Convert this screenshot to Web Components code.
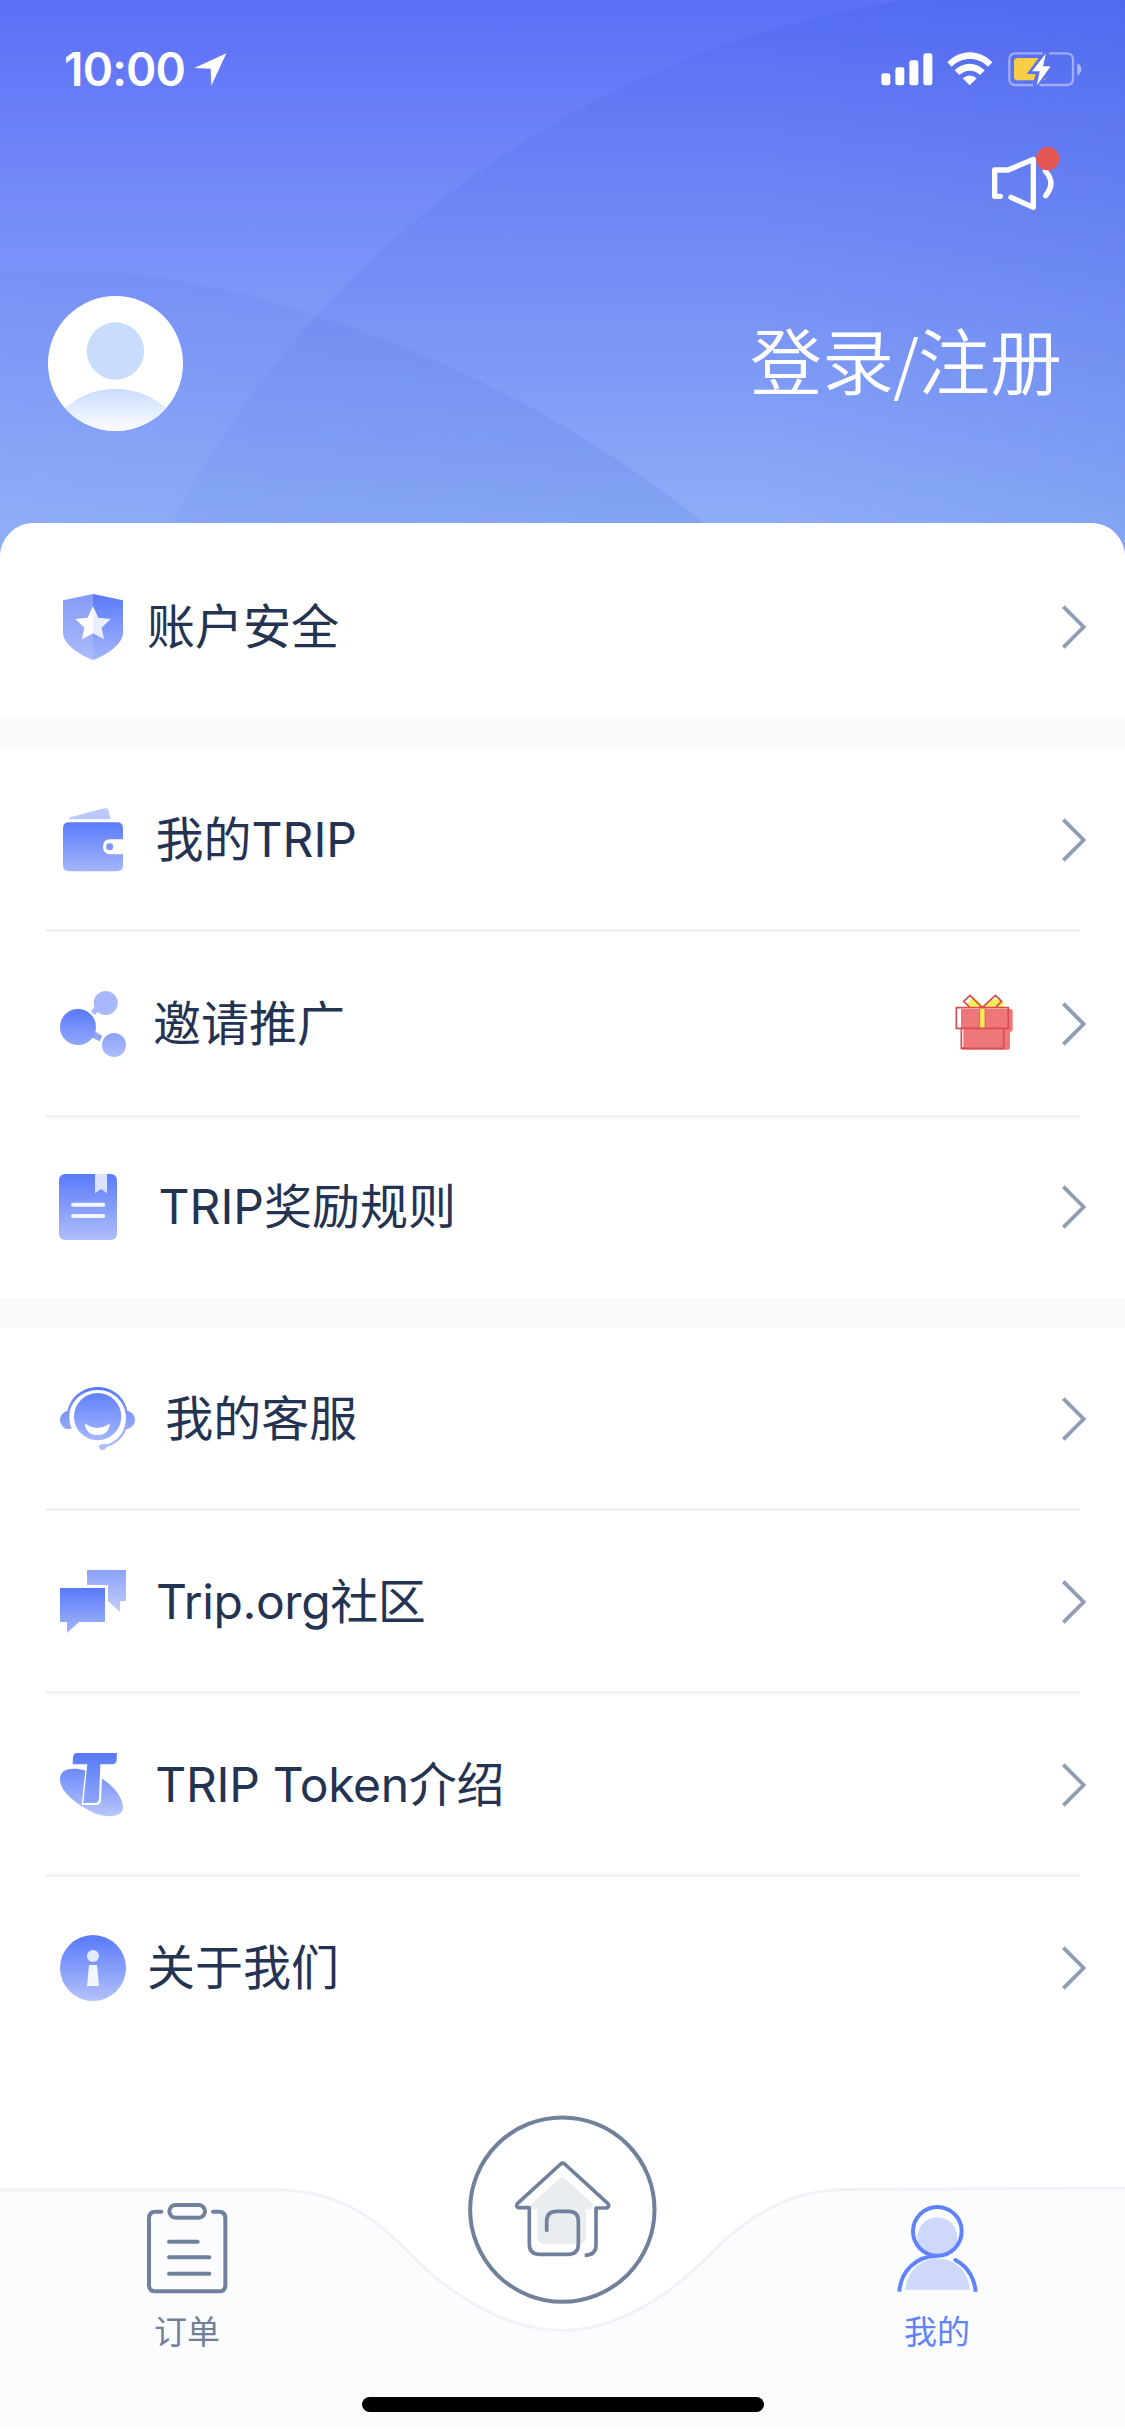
<!DOCTYPE html>
<html lang="zh-CN">
<head>
<meta charset="utf-8">
<title>我的</title>
<style>
html,body{margin:0;padding:0;background:#fff}
body{width:1125px;height:2436px;overflow:hidden;font-family:Inter,"Noto Sans CJK SC",sans-serif;color:#253353}
</style>
</head>
<body>
<profile-page></profile-page>
<script>
const define = (name, html) => {
  const t = document.createElement('template');
  t.innerHTML = html;
  customElements.define(name, class extends HTMLElement {
    constructor() {
      super();
      this.attachShadow({ mode: 'open' }).appendChild(t.content.cloneNode(true));
    }
  });
};

const grad = (id, a, b, y1, y2) =>
  `<linearGradient id="${id}" gradientUnits="userSpaceOnUse" x1="0" y1="${y1}" x2="0" y2="${y2}"><stop stop-color="${a}"/><stop offset="1" stop-color="${b}"/></linearGradient>`;

/* Each glyph: viewBox in thirds of a pixel, rendered size, and markup. */
const ICONS = {
  shield: ['99 72 180 198', 60, 66, `<defs>${grad('a','#849bf7','#acbbfa',72,270)}${grad('b','#5a7bfa','#a3b5fb',72,270)}</defs>
    <path fill="url(#a)" d="M189 72 99 91V188C99 222 150 256 189 270Z"/><path fill="url(#b)" d="M189 72 279 91V188C279 222 228 256 189 270Z"/>
    <path fill="#fff" d="M189 108 173 143 136 147 163 173 156 208 189 190Z"/><path fill="#e9effe" d="M189 108 205 143 242 147 215 173 222 208 189 190Z"/>`],
  wallet: ['99 710 180 190', 60, 63.3, `<defs>${grad('a','#5a7bfa','#a5b6fb',753,900)}</defs>
    <path fill="#bac8fc" d="M116 744Q116 739 123 737L224 711Q232 709 235 717L242 744Z"/>
    <path fill="url(#a)" d="M117 753H261Q279 753 279 771V804H241Q219 804 219 826Q219 849 241 849H279V882Q279 900 261 900H117Q99 900 99 882V771Q99 753 117 753Z"/><circle cx="239" cy="826" r="10.500" fill="#7c96f9"/>`],
  share: ['90 90 198 198', 66, 66, `<defs>${grad('a','#587afa','#92a7fa',144,252)}${grad('b','#8aa1f9','#b0befb',216,288)}</defs>
    <path d="M183 150 194 138 206 150 194 162Z" fill="#a8b8fb"/><path d="M193 210 217 225 209 241 183 229Z" fill="#8fa5fa"/>
    <circle cx="144" cy="198" r="54" fill="url(#a)"/><circle cx="227" cy="126" r="36" fill="#a8b8fb"/><circle cx="252" cy="252" r="36" fill="url(#b)"/>`],
  book: ['84 639 174 198', 58, 66, `<defs>${grad('a','#5a7bfa','#afbefb',639,837)}</defs>
    <rect x="84" y="639" width="174" height="198" rx="18" fill="url(#a)"/><path fill="#d9e2fe" d="M192 639H228V697L210 684 192 697Z"/>
    <path d="M126 731H217M126 765H217" stroke="#f4f6ff" stroke-width="12" stroke-linecap="round"/>`],
  headset: ['90 113 226 190', 75.3, 63.3, `<defs>${grad('a','#587afa','#b3c1fb',113,302)}</defs>
    <circle cx="203" cy="202" r="71" fill="url(#a)"/><path d="M164 222Q203 250 240 222Q236 258 202 258Q168 257 164 222Z" fill="#fff"/>
    <path fill="url(#a)" fill-rule="evenodd" d="M113 184C121 143 158 113 203 113C248 113 284 143 292 184C306 188 315 198 315 211C315 226 304 238 289 239C278 268 256 286 230 293C228 305 207 305 207 293C207 283 219 283 231 285C270 273 288 240 288 206C288 158 250 122 203 122C156 122 118 158 118 202C118 214 120 226 125 238C105 244 90 228 90 211C90 198 100 188 113 184Z"/>`],
  chat: ['90 657 198 190', 66, 63.3, `<defs>${grad('a','#587afa','#a4b5fb',711,846)}${grad('b','#8ba1f9','#c3cffc',657,783)}</defs>
    <path fill="url(#b)" d="M171 657H288V750H270V783L234 750V702H171Z"/><path fill="url(#a)" d="M90 711H225V813H147L111 846V813H90Z"/>`],
  token: ['90 96 190 190', 63.3, 63.3, `<defs>${grad('a','#587afa','#8fa6fa',96,250)}${grad('b','#6a88fa','#b9c6fc',140,286)}</defs>
    <path fill="url(#b)" d="M90 174C90 142 130 138 166 149L155 252H198Q212 252 213 238L216 173C254 196 279 232 279 259C279 292 226 290 192 276C140 250 90 214 90 174Z"/>
    <path fill="url(#a)" d="M142 96H261L260 118Q259 130 247 130H211L207 233Q206 246 194 246H160L172 130H128L129 109Q130 96 142 96Z"/>`],
  info: ['90 645 198 198', 66, 66, `<defs>${grad('a','#587afa','#b3c1fb',645,843)}</defs>
    <circle cx="189" cy="744" r="99" fill="url(#a)"/><circle cx="189" cy="708" r="18" fill="#e3eafe"/><path d="M177 735H201L207 798H171Z" fill="#f3f6ff"/>`],
  gift: ['165 103 174 168', 58, 56, `<g><path fill="#ef7779" d="M183 148H333Q338 148 338 153V211Q338 216 330 217V264Q330 270 324 270H190Q183 270 183 264Z"/>
    <path fill="#f5eb58" d="M202 130 222 111 247 138 280 118 303 122 312 132 308 142 298 145H210Z"/>
    <path fill="#fff" d="M191 125 210 106 219 114 200 133ZM169 145H183V205H169ZM186 208H190V262H186Z"/><path fill="#f5eb58" d="M239 146H255V206H239Z"/>
    <path fill="none" stroke="#d94b50" stroke-width="5" d="M169 144H325V206H169ZM184 206H311V266H184ZM210 144 191 125 210 107 247 144 286 107 305 125 286 144"/><path fill="none" stroke="#d94b50" stroke-width="2" d="M239 146V206M255 146V206"/></g>`],
  chevron: ['488 124 70 132', 23.3, 44, `<path d="M492 129 553 190 492 251" fill="none" stroke="#909db2" stroke-width="11.500"/>`],
  location: ['582 166 98 98', 32.7, 32.7, `<path fill="#fff" d="M679 167 634 264 632 213 583 211Z"/>`],
  signal: ['62 68 155 98', 51.7, 32.7, `<g fill="#fff"><rect x="63" y="129" width="27" height="36" rx="7"/><rect x="105" y="111" width="27" height="54" rx="7"/><rect x="147" y="90" width="27" height="75" rx="7"/><rect x="189" y="69" width="27" height="96" rx="7"/></g>`],
  wifi: ['262 65 137 101', 45.7, 33.7, `<g fill="#fff"><path d="M263 96C300 56 361 56 398 96L385 109C355 78 306 78 276 109Z"/><path d="M285 120C310 94 350 94 375 120L361 134C344 117 317 117 299 134Z"/><path d="M309 144Q330 127 351 144L330 165Z"/></g>`],
  battery: ['443 65 222 104', 74, 34.7, `<path d="M547 69H466Q447 69 447 88V145Q447 164 466 164H519M566 69H619Q638 69 638 88V145Q638 164 619 164H537" fill="none" stroke="#fff" stroke-opacity=".42" stroke-width="7"/><path d="M651 99Q663 105 663 117Q663 129 651 136Z" fill="#fff" opacity=".5"/><path fill="#f8ce47" d="M472 83H535L499 131H526L521 150H472Q461 150 461 139V94Q461 83 472 83ZM557 143 552 150 549 149Z"/><path fill="#fff" d="M557 69 515 123H538L529 166 571 108H548Z"/>`],
  speaker: ['396 350 202 192', 67.3, 64, `<path fill="none" stroke="#fff" stroke-width="16" stroke-linecap="round" stroke-linejoin="round" d="M421 498H404V419H444L520 387V531L453 501"/><path fill="none" stroke="#fff" stroke-width="16" stroke-linecap="round" d="M556 422Q589 458 557 496"/><circle cx="563" cy="385" r="35" fill="#e55753"/>`],
  avatar: ['0 0 135 135', 135, 135, `<defs>${grad('a','#c9dcfd','#ffffff',93,137)}<clipPath id="c"><circle cx="67.500" cy="67.500" r="67.500"/></clipPath></defs>
    <circle cx="67.500" cy="67.500" r="67.500" fill="#fff"/><circle cx="67.500" cy="55" r="28.700" fill="#c9dcfe"/><circle cx="67.500" cy="170" r="77" fill="url(#a)" clip-path="url(#c)"/>`],
  orders: ['142 127 242 272', 80.7, 90.7, `<g fill="none" stroke="#71819c" stroke-width="12" stroke-linecap="round"><path d="M185 153H168Q148 153 148 173V373Q148 392 168 392H358Q377 392 377 373V173Q377 153 358 153H340"/><rect x="209" y="133" width="107" height="38" rx="19"/><path d="M208 243H294M208 290H329M208 339H329"/></g>`],
  person: ['111 133 242 260', 80.7, 86.7, `<circle cx="232" cy="230" r="60" fill="#ced8fb"/><path d="M136 387C140 333 180 294 233 294C287 294 326 333 329 387Z" fill="#ced8fb"/><g fill="none" stroke="#6083fb" stroke-width="12"><circle cx="232" cy="212" r="73"/><path d="M118 393C122 333 166 286 232 286"/><path d="M286 298Q340 327 347 393"/></g><circle cx="286" cy="298" r="6" fill="#6083fb"/>`],
  home: ['84 74 566 568', 188.7, 189.3, `<circle cx="367" cy="358" r="276.500" fill="#fff" stroke="#71819c" stroke-width="12"/>
    <path fill="#e9edf0" d="M358 265Q367 257 376 265L458 341Q464 350 452 357H438V440Q438 462 416 462H314Q292 462 292 440V357H278Q268 350 274 341Z"/>
    <path fill="none" stroke="#71819c" stroke-width="11" stroke-linejoin="round" d="M320 424V393Q320 363 350 363H386Q415 363 415 393V462Q415 492 385 492H298Q268 492 268 462V352H236Q226 349 232 340L362 221Q368 216 374 221L504 340Q510 349 499 353H468V465Q468 495 434 495"/>`]
};
customElements.define('app-icon', class extends HTMLElement {
  connectedCallback() {
    if (this.shadowRoot) return;
    const [vb, w, h, body] = ICONS[this.getAttribute('name')];
    this.attachShadow({ mode: 'open' }).innerHTML =
      `<style>:host{display:block;flex:none}svg{display:block;overflow:visible}</style><svg width="${w}" height="${h}" viewBox="${vb}" preserveAspectRatio="none">${body}</svg>`;
  }
});

define('status-bar', `<style>
:host{display:flex;align-items:center;height:138px;padding:0 43px 0 64px;box-sizing:border-box;color:#fff}
.time{font-size:46px;font-weight:600;line-height:56px;letter-spacing:-.8px;margin-right:9px}
.right{margin-left:auto;display:flex;align-items:center;gap:15px}
</style><span class="time"><slot></slot></span><app-icon name="location"></app-icon>
<div class="right"><app-icon name="signal"></app-icon><app-icon name="wifi"></app-icon><app-icon name="battery"></app-icon></div>`);

define('profile-header', `<style>
:host{display:block;position:relative;height:558px;background:linear-gradient(#5b6ff7 0,#6e84f8 150px,#7f99f9 315px,#93b2f9 525px);overflow:hidden}
.bg{position:absolute;inset:0}
.body{position:relative}
.notice{display:flex;justify-content:flex-end;padding:9px 66px 0 0}
.user{display:flex;align-items:center;justify-content:space-between;padding:85px 63px 0 48px}
.login{font-size:72px;line-height:100px;margin-top:-9px;font-weight:350;color:#fff;font-family:"Noto Sans CJK SC",sans-serif}
.login i{font-style:normal;font-size:66px;margin:0 -1px}
</style>
<svg class="bg" width="1125" height="558" viewBox="0 0 1125 558"><defs>
<linearGradient id="v" gradientUnits="userSpaceOnUse" x1="0" y1="0" x2="0" y2="540"><stop stop-color="#2c54d4" stop-opacity=".12"/><stop offset="1" stop-color="#2c54d4" stop-opacity=".05"/></linearGradient>
<linearGradient id="r" gradientUnits="userSpaceOnUse" x1="760" y1="0" x2="1125" y2="0"><stop stop-color="#2c54d4" stop-opacity="0"/><stop offset="1" stop-color="#2c54d4" stop-opacity=".11"/></linearGradient>
<linearGradient id="s" gradientUnits="userSpaceOnUse" x1="0" y1="0" x2="700" y2="0"><stop stop-color="#3c5ed0" stop-opacity=".06"/><stop offset="1" stop-color="#3c5ed0" stop-opacity=".13"/></linearGradient></defs>
<circle cx="1054" cy="985" r="996" fill="url(#v)"/><circle cx="1054" cy="985" r="996" fill="url(#r)"/><path d="M0 274Q30 270 63 270C150 270 240 289 316 316C455 358 590 432 703 522L730 558H0Z" fill="url(#s)"/></svg>
<div class="body"><status-bar>10:00</status-bar><div class="notice"><app-icon name="speaker"></app-icon></div>
<div class="user"><app-icon name="avatar"></app-icon><span class="login">登录<i>/</i>注册</span></div></div>`);

define('menu-row', `<style>
:host{display:flex;align-items:center;height:180px;padding:1px 40px 0 60px;box-sizing:border-box;font-size:48px;line-height:72px}
.label{flex:1;margin-left:var(--gap,31px);letter-spacing:var(--track,0)}
.extra{margin:-3px 49px 0 0}
</style><slot name="icon"></slot><span class="label"><slot></slot></span><span class="extra"><slot name="extra"></slot></span><app-icon name="chevron"></app-icon>`);

define('menu-group', `<style>
:host{display:flex;flex-direction:column;background:#fff}
</style><slot></slot>`);

define('menu-line', `<style>:host{display:block;height:3px;margin:0 45px;background:#f1f2f7}</style>`);

define('tab-item', `<style>
:host{display:flex;flex-direction:column;align-items:center;justify-content:flex-start;color:#71819c;font-size:33px;line-height:48px}
.label{margin:var(--label-gap,14px) 1px 0 0}
</style><slot name="icon"></slot><span class="label"><slot></slot></span>`);

define('tab-bar', `<style>
:host{display:block;position:relative;height:379px}
.bg{position:absolute;inset:0}
nav{position:relative;display:grid;grid-template-columns:repeat(3,375px);height:340px}
.orders{padding-top:146px}.mine{padding-top:148px;color:#6083fb;--label-gap:16px}.home{padding-top:57.500px}
.bar{position:relative;width:402px;height:15px;border-radius:8px;background:#000;margin:0 auto}
</style>
<svg class="bg" width="1125" height="379" viewBox="0 2057 1125 379"><path fill="#fbfcfe" d="M0 2190H276C340 2190 378 2220 412 2256C455 2299 510 2330.500 562 2330.500C615 2330.500 670 2297 712 2252C750 2215 790 2190 845 2189.500L1125 2188V2427H0Z"/><path fill="none" stroke="#f1f2f8" stroke-width="3" d="M0 2190H276C340 2190 378 2220 412 2256C455 2299 510 2330.500 562 2330.500C615 2330.500 670 2297 712 2252C750 2215 790 2190 845 2189.500L1125 2188"/></svg>
<nav><tab-item class="orders"><app-icon slot="icon" name="orders"></app-icon>订单</tab-item><tab-item class="home"><app-icon slot="icon" name="home"></app-icon></tab-item><tab-item class="mine"><app-icon slot="icon" name="person"></app-icon>我的</tab-item></nav><div class="bar"></div>`);

define('profile-page', `<style>
:host{display:block;width:1125px;height:2436px;background:#fff;overflow:hidden}
main{position:relative;display:flex;flex-direction:column;gap:30px;margin-top:-35.500px;background:#fafafa;border-radius:34px 34px 0 0;overflow:hidden}
.first{height:196.500px;padding-top:14px;box-sizing:border-box}
.tall{height:183px;padding-top:0}.short{height:177px;margin-bottom:3px;padding-top:0}
.in{padding-left:63px}.book{padding-left:58.500px}
</style>
<profile-header></profile-header>
<main>
<menu-group class="first"><menu-row class="in" style="--gap:24px"><app-icon slot="icon" name="shield"></app-icon>账户安全</menu-row></menu-group>
<menu-group>
<menu-row class="in" style="--gap:32.500px"><app-icon slot="icon" name="wallet"></app-icon>我的TRIP</menu-row><menu-line></menu-line>
<menu-row class="tall" style="--gap:27px"><app-icon slot="icon" name="share"></app-icon>邀请推广<app-icon slot="extra" name="gift"></app-icon></menu-row><menu-line></menu-line>
<menu-row class="short book" style="--gap:42px"><app-icon slot="icon" name="book"></app-icon>TRIP奖励规则</menu-row>
</menu-group>
<menu-group>
<menu-row style="--gap:30px"><app-icon slot="icon" name="headset"></app-icon>我的客服</menu-row><menu-line></menu-line>
<menu-row style="--gap:30px;--track:-.4px"><app-icon slot="icon" name="chat"></app-icon>Trip.org社区</menu-row><menu-line></menu-line>
<menu-row style="--gap:32px;--track:-.3px"><app-icon slot="icon" name="token"></app-icon>TRIP Token介绍</menu-row><menu-line></menu-line>
<menu-row style="--gap:21px"><app-icon slot="icon" name="info"></app-icon>关于我们</menu-row>
</menu-group>
</main>
<tab-bar></tab-bar>`);
</script>
</body>
</html>
